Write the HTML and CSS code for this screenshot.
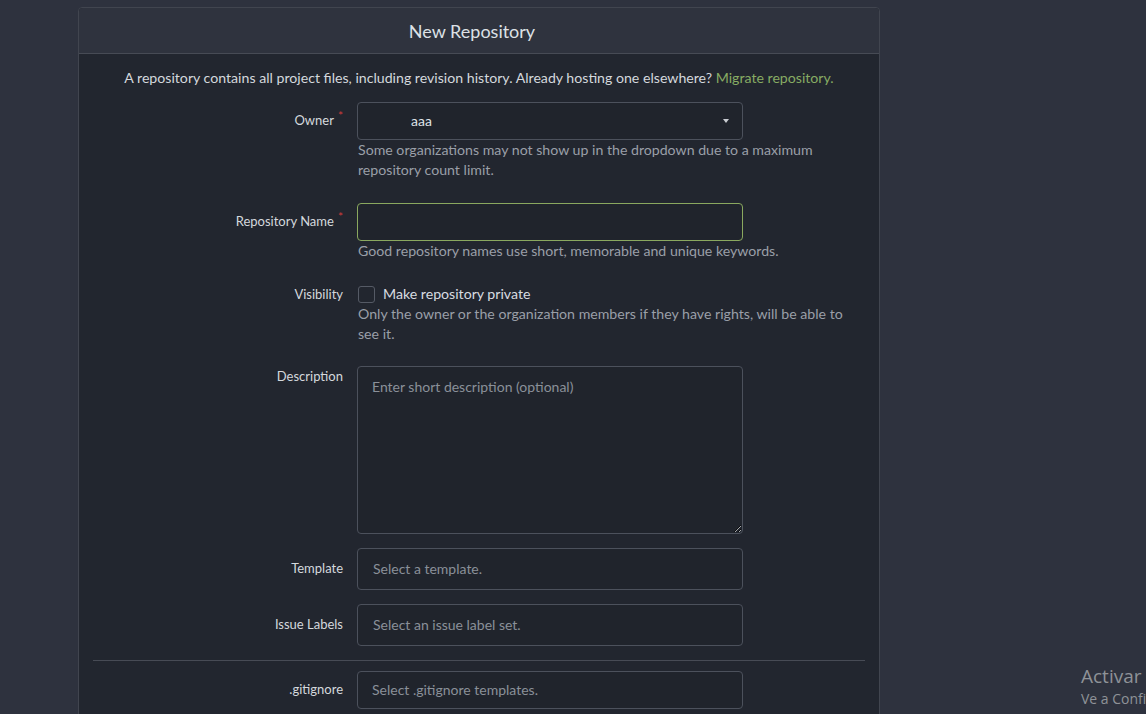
FILE: index.html
```html
<!DOCTYPE html>
<html lang="en">
<head>
<meta charset="utf-8">
<title>New Repository</title>
<link rel="stylesheet" href="styles.css">
</head>
<body>
<div class="page">
  <div class="card">
    <div class="card-header">New Repository</div>
    <div class="card-body">
      <p class="intro">A repository contains all project files, including revision history. Already hosting one elsewhere? <a class="link" href="#">Migrate repository.</a></p>

      <div class="field">
        <label class="flabel req">Owner</label>
        <div class="select owner">
          <span class="owner-name">aaa</span>
          <span class="caret"></span>
        </div>
        <div class="help">Some organizations may not show up in the dropdown due to a maximum repository count limit.</div>
      </div>

      <div class="field">
        <label class="flabel req">Repository Name</label>
        <input class="input focus" type="text">
        <div class="help">Good repository names use short, memorable and unique keywords.</div>
      </div>

      <div class="field">
        <label class="flabel top">Visibility</label>
        <label class="check"><span class="box"></span>Make repository private</label>
        <div class="help help-tight">Only the owner or the organization members if they have rights, will be able to see it.</div>
      </div>

      <div class="field">
        <label class="flabel top">Description</label>
        <textarea class="textarea" placeholder="Enter short description (optional)"></textarea>
      </div>

      <div class="field">
        <label class="flabel tall">Template</label>
        <div class="select tall-box"><span class="ph">Select a template.</span></div>
      </div>

      <div class="field">
        <label class="flabel tall">Issue Labels</label>
        <div class="select tall-box"><span class="ph">Select an issue label set.</span></div>
      </div>

      <div class="divider"></div>

      <div class="field">
        <label class="flabel">.gitignore</label>
        <div class="select"><span class="ph">Select .gitignore templates.</span></div>
      </div>
    </div>
  </div>
</div>
<div class="watermark">
  <div class="wm-title">Activar Windows</div>
  <div class="wm-sub">Ve a Configuración para activar Windows.</div>
</div>
</body>
</html>
```

FILE: styles.css
```css
html, body {
  margin: 0;
  padding: 0;
  height: 100%;
  overflow: hidden;
}
body {
  background: #2e323e;
  font-family: Lato, "Noto Sans", sans-serif;
  font-size: 14.15px;
  line-height: 20px;
  color: #d2d6dc;
}
.page {
  padding: 7px 0 0 78px;
}
.card {
  width: 800px;
  border: 1px solid #41454f;
  border-radius: 4px;
  background: #22262f;
}
.card-header {
  height: 45px;
  line-height: 47px;
  padding-right: 14px;
  background: #2f333e;
  border-bottom: 1px solid #474b55;
  border-radius: 4px 4px 0 0;
  text-align: center;
  font-size: 18px;
  color: #dde1e6;
}
.card-body {
  padding: 14px 14px 20px;
}
.intro {
  margin: 0 0 14px;
  text-align: center;
  color: #d4d8dd;
}
.link {
  color: #87ab63;
  text-decoration: none;
}
.field {
  display: grid;
  grid-template-columns: 250px 386px;
  column-gap: 14px;
  margin-bottom: 14px;
}
.flabel {
  grid-column: 1;
  text-align: right;
  padding-top: 8px;
  color: #d4d8dd;
  font-size: 13px;
}
.flabel.top { padding-top: 0; }
.flabel.tall { padding-top: 10px; }
.flabel.req::after {
  content: "*";
  color: #d13b3b;
  font-size: 12px;
  margin-left: 4px;
  position: relative;
  top: -5px;
}
.select, .input, .textarea {
  grid-column: 2;
  box-sizing: border-box;
  width: 386px;
  height: 38px;
  border: 1px solid #4c515c;
  border-radius: 4px;
  background: #20242c;
  color: #d4d8dd;
  font-family: inherit;
  font-size: 14px;
}
.select {
  display: flex;
  align-items: center;
  padding: 0 14px;
}
.tall-box {
  height: 42px;
  padding: 0 15px;
}
.ph {
  color: #8a9099;
}
.owner {
  padding-left: 53px;
  position: relative;
}
.owner-name {
  flex: 1;
  color: #dfe3e8;
}
.caret {
  width: 0;
  height: 0;
  border-left: 3.5px solid transparent;
  border-right: 3.5px solid transparent;
  border-top: 4px solid #c9ccd2;
  margin-right: -1px;
}
.input {
  outline: none;
  padding: 0 14px;
}
.input.focus {
  border-color: #8aa85f;
}
.textarea {
  height: 168px;
  padding: 10px 14px;
  line-height: 20px;
  resize: vertical;
  outline: none;
  display: block;
}
.textarea::placeholder {
  color: #8a9099;
}
.help {
  grid-column: 2;
  padding: 0 0 9px 1px;
  color: #9a9fa8;
  width: 500px;
}
.help-tight {
  padding-bottom: 8px;
}
.check {
  grid-column: 2;
  display: flex;
  align-items: center;
  color: #d8dce1;
  margin-left: 1px;
}
.box {
  box-sizing: border-box;
  width: 17px;
  height: 17px;
  border: 1px solid #555a65;
  border-radius: 3px;
  margin-right: 8px;
}
.divider {
  height: 1px;
  background: #474b55;
  margin: 0 0 10px;
}
.watermark {
  position: absolute;
  left: 1081px;
  top: 663px;
  white-space: nowrap;
  color: #8f9298;
  font-family: "Open Sans", "Noto Sans", sans-serif;
}
.wm-title {
  font-size: 19px;
  line-height: 26px;
}
.wm-sub {
  font-size: 14px;
  line-height: 20px;
}
```
